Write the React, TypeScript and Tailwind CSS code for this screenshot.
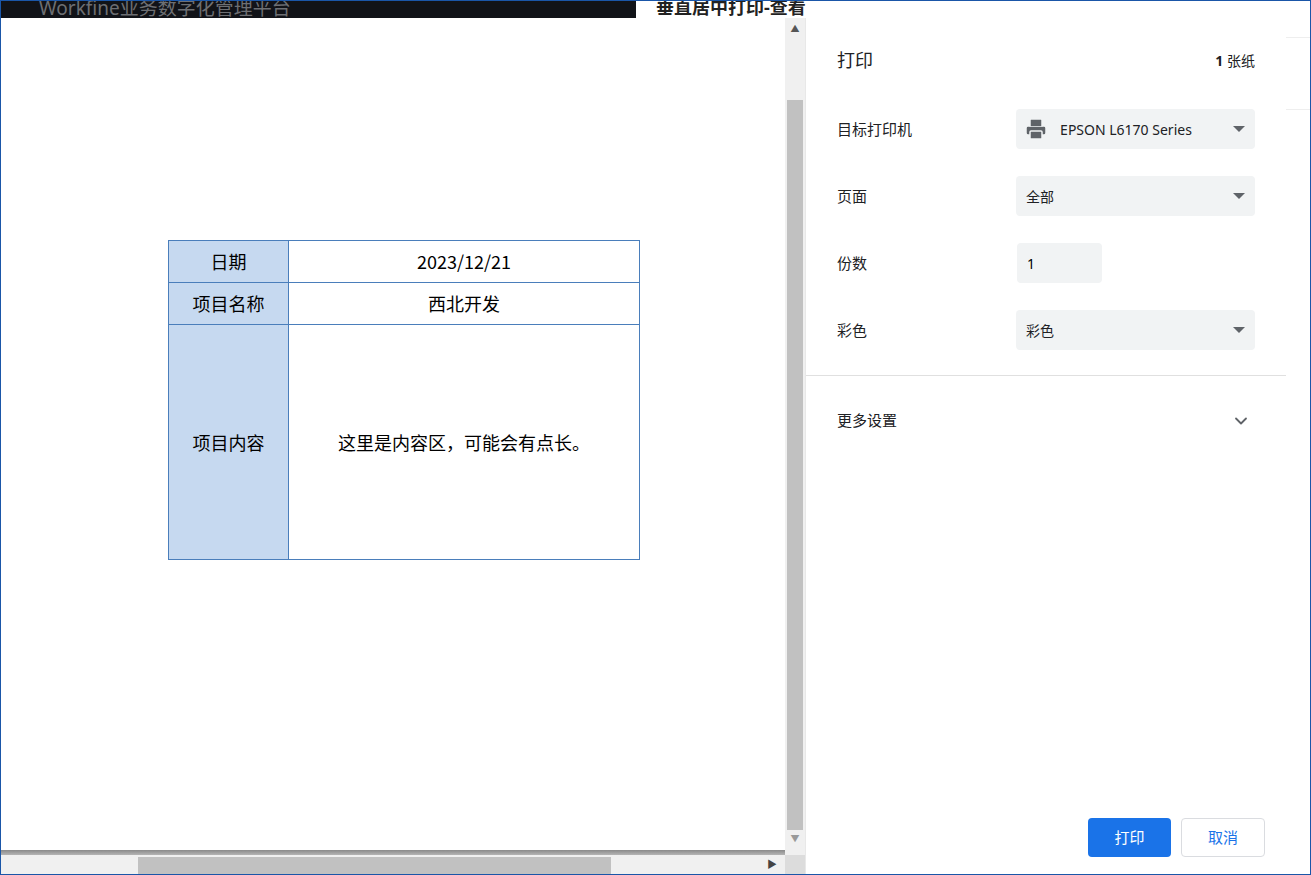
import { ChevronDown, Printer } from 'lucide-react'

const font = { fontFamily: '"Noto Sans", "Noto Sans CJK SC", sans-serif' }

function Row({ label, children }: { label: string; children: React.ReactNode }) {
  return (
    <div className="flex items-center h-[40px] mb-[27px]">
      <span className="w-[180px] text-[15px] text-[#202124]">{label}</span>
      {children}
    </div>
  )
}

function Select({ text, icon }: { text: string; icon?: boolean }) {
  return (
    <div className="flex items-center w-[240px] h-[40px] rounded bg-[#f1f3f4] px-[8px] text-[14px] text-[#202124]">
      {icon && <Printer size={24} className="text-[#5f6368] mr-[10px]" fill="#5f6368" stroke="#f1f3f4" strokeWidth={1.5} />}
      <span className="flex-1 pl-[2px]">{text}</span>
      <span className="w-0 h-0 border-l-[6px] border-r-[6px] border-t-[6px] border-l-transparent border-r-transparent border-t-[#5f6368] mr-[2px]" />
    </div>
  )
}

export default function App() {
  return (
    <div style={font} className="w-[1311px] h-[875px] overflow-hidden border border-[#1a56a8] flex flex-col bg-white">
      <div className="h-[17px] flex shrink-0 overflow-hidden">
        <div className="w-[635px] bg-[#111318] text-[#6d6f73] text-[19px] leading-[14px] pl-[38px] overflow-hidden">Workfine业务数字化管理平台</div>
        <div className="flex-1 text-[18px] leading-[12px] font-bold pl-[20px] text-[#222] overflow-hidden">垂直居中打印-查看</div>
      </div>
      <div className="flex flex-1 min-h-0">
        <div className="w-[804px] flex flex-col">
          <div className="flex flex-1 min-h-0">
            <div className="flex-1 flex flex-col">
              <div className="flex-1 pl-[167px] pt-[222px]">
                <table className="border-collapse text-[18px] text-black" style={{ fontFamily: '"Noto Sans CJK SC", sans-serif' }}>
                  <tbody>
                    <tr className="h-[42px]">
                      <td className="w-[120px] border border-[#4a7ebb] bg-[#c6d9f0] text-center">日期</td>
                      <td className="w-[351px] border border-[#4a7ebb] text-center">2023/12/21</td>
                    </tr>
                    <tr className="h-[42px]">
                      <td className="border border-[#4a7ebb] bg-[#c6d9f0] text-center">项目名称</td>
                      <td className="border border-[#4a7ebb] text-center">西北开发</td>
                    </tr>
                    <tr className="h-[235px]">
                      <td className="border border-[#4a7ebb] bg-[#c6d9f0] text-center">项目内容</td>
                      <td className="border border-[#4a7ebb] text-center">这里是内容区，可能会有点长。</td>
                    </tr>
                  </tbody>
                </table>
              </div>
              <div className="h-[5px] bg-gradient-to-b from-[#8a8a8a] to-[#b5b5b5]" />
            </div>
            <div className="w-[20px] bg-[#f0f0f0] flex flex-col items-center">
              <span className="text-[9px] text-[#555] mt-[4px]">▲</span>
              <div className="w-[16px] h-[730px] bg-[#c1c1c1] mt-[64px]" />
              <span className="text-[9px] text-[#999] mt-[2px]">▼</span>
            </div>
          </div>
          <div className="h-[19px] flex bg-[#f0f0f0] shrink-0">
            <div className="flex-1 relative">
              <div className="absolute left-[137px] top-[2px] w-[473px] h-[17px] bg-[#c1c1c1]" />
              <span className="absolute right-[8px] top-[2px] text-[10px] text-[#444]">▶</span>
            </div>
            <div className="w-[20px] bg-[#dcdcdc]" />
          </div>
        </div>
        <div className="w-[481px] flex flex-col border-l border-[#e8e8e8]">
          <div className="flex items-center justify-between px-[31px] pt-[29px] pb-[35px]">
            <span className="text-[18px] text-[#202124]">打印</span>
            <span className="text-[14px] text-[#202124]"><b>1</b> 张纸</span>
          </div>
          <div className="px-[31px]">
            <Row label="目标打印机"><Select text="EPSON L6170 Series" icon /></Row>
            <Row label="页面"><Select text="全部" /></Row>
            <Row label="份数">
              <div className="w-[85px] h-[40px] rounded bg-[#f1f3f4] px-[10px] flex items-center text-[14px]">1</div>
            </Row>
            <Row label="彩色"><Select text="彩色" /></Row>
          </div>
          <div className="border-t border-[#e0e0e0] -mt-[2px] flex items-center justify-between px-[31px] h-[90px]">
            <span className="text-[15px] text-[#202124]">更多设置</span>
            <ChevronDown size={20} strokeWidth={2.2} className="text-[#5f6368] mr-[4px]" />
          </div>
          <div className="flex-1" />
          <div className="flex justify-end gap-[10px] px-[21px] pb-[17px]">
            <button className="w-[83px] h-[39px] rounded bg-[#1a73e8] text-white text-[15px]">打印</button>
            <button className="w-[84px] h-[39px] rounded border border-[#dadce0] text-[#1a73e8] text-[15px]">取消</button>
          </div>
        </div>
        <div className="flex-1 bg-white flex flex-col">
          <div className="h-[20px] border-b border-[#eee]" />
          <div className="h-[72px] border-b border-[#eee]" />
        </div>
      </div>
    </div>
  )
}
